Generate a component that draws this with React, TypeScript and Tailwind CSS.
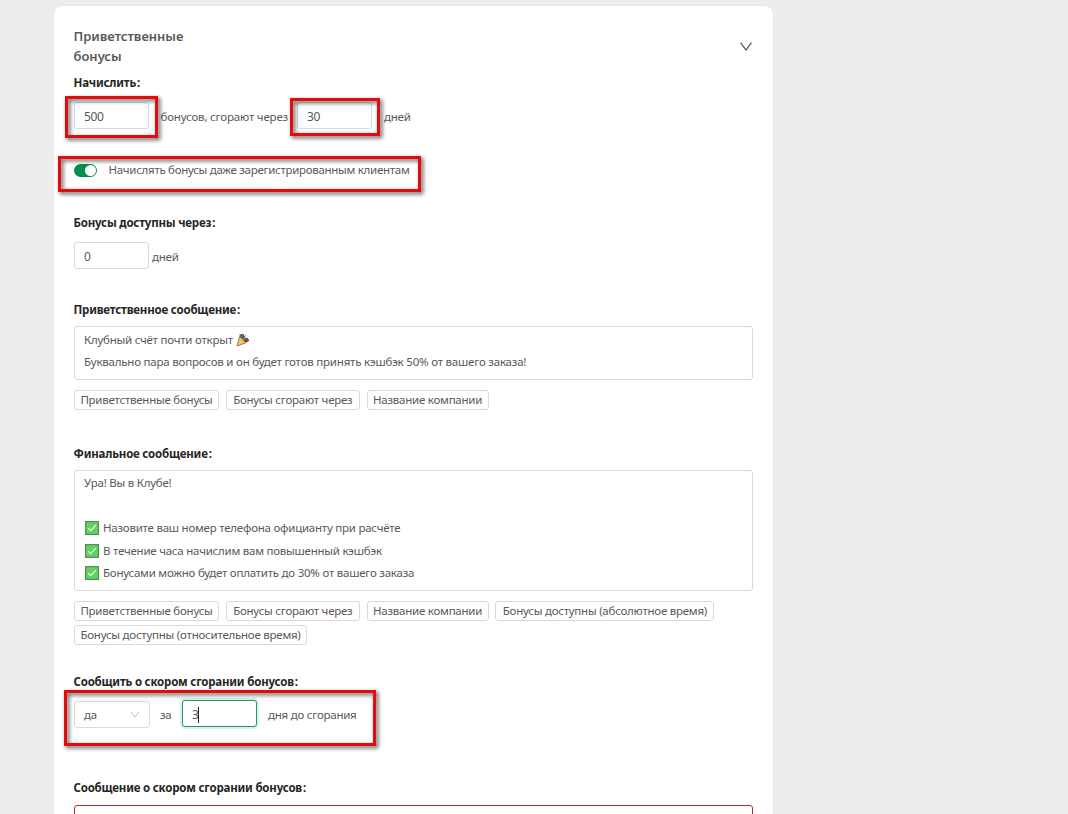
import type { ReactNode } from "react";

const GREETING_TAGS = [
  { label: "Приветственные бонусы", width: "w-[145px]" },
  { label: "Бонусы сгорают через", width: "w-[134px]" },
  { label: "Название компании", width: "w-[122px]" },
];

const FINAL_TAGS = [
  ...GREETING_TAGS,
  { label: "Бонусы доступны (абсолютное время)", width: "w-[219px]" },
  { label: "Бонусы доступны (относительное время)", width: "w-[233px]" },
];

const FINAL_POINTS = [
  "Назовите ваш номер телефона официанту при расчёте",
  "В течение часа начислим вам повышенный кэшбэк",
  "Бонусами можно будет оплатить до 30% от вашего заказа",
];

function Label({ children }: { children: ReactNode }) {
  return (
    <h3 className="-ml-[0.5px] h-5 text-[11.5px] leading-5 font-bold tracking-[-0.2px] whitespace-nowrap text-[#262626]">
      {children}
      <span className="ml-px">:</span>
    </h3>
  );
}

function Field({ children, className = "border-[#d9d9d9]" }: { children: ReactNode; className?: string }) {
  return (
    <div className={`flex h-[27px] w-[75px] shrink-0 items-center rounded-[3px] border bg-white pt-[3px] pl-[9px] text-[12px] tracking-[-0.4px] ${className}`}>
      {children}
    </div>
  );
}

function Tags({ items }: { items: { label: string; width: string }[] }) {
  return (
    <div className="mt-2.5 flex flex-wrap gap-x-[6.8px] gap-y-1">
      {items.map((tag) => (
        <span
          key={tag.label}
          className={`${tag.width} flex h-5 items-center justify-center rounded-[3px] border border-[#d9d9d9] whitespace-nowrap`}
        >
          {tag.label}
        </span>
      ))}
    </div>
  );
}

// Red marker frame drawn over the form
function Marker({ className }: { className: string }) {
  return (
    <div className={`pointer-events-none absolute border-3 border-[#e30b0b] drop-shadow-[2px_2px_2px_rgba(0,0,0,0.7)] ${className}`} />
  );
}

function Chevron({ className }: { className: string }) {
  return (
    <svg className={className} viewBox="0 0 12 9" fill="none" stroke="currentColor" strokeWidth="1.1">
      <path d="M0.6 0.6 6 8 11.4 0.6" />
    </svg>
  );
}

function CheckEmoji() {
  return (
    <svg className="mr-1 ml-px h-3.5 w-3.5 shrink-0" viewBox="0 0 14 14" fill="none">
      <rect x="0.6" y="0.6" width="12.8" height="12.8" fill="#5fd35f" stroke="#5a8a5c" strokeWidth="1.2" />
      <path d="M3.2 7.2 5.8 9.6 10.8 4.2" stroke="#e9fbe9" strokeWidth="1.2" />
    </svg>
  );
}

function PartyEmoji() {
  return (
    <svg className="ml-[3px] h-3.5 w-3.5 shrink-0" viewBox="0 0 14 14" fill="none">
      <path d="M3.4 1.4 7.2.8 9.4 4.4 7 6.6 4 4Z" fill="#4b6b68" />
      <path d="M7.4 6 11 4.6 13.4 7.4 10.6 9.4 8.2 8.6Z" fill="#70483f" />
      <path d="M3.6 3.8 9.8 9.8 1 13Z" fill="#f2c963" stroke="#635238" strokeWidth="0.7" />
      <path d="M6.6 5.2 10.2 2.2" stroke="#8b6a4a" />
    </svg>
  );
}

export default function App() {
  return (
    <div className="h-screen overflow-hidden bg-[#ededed] pt-1.5 pl-[54px] font-['Noto_Sans','Open_Sans',sans-serif] text-[11.5px] leading-[22.5px] tracking-[-0.24px] text-[#595959]">
      <main className="h-[900px] w-[719px] rounded-t-[8px] bg-white px-5 pt-5 shadow-[0_0_2px_rgba(0,0,0,0.08)]">
        <header className="flex justify-between">
          <h2 className="-ml-[0.5px] w-[131px] text-[13px] leading-5 font-semibold tracking-[-0.03px]">Приветственные бонусы</h2>
          <Chevron className="mt-4 mr-px h-[9px] w-3 text-[#4a4a4a]" />
        </header>

        <section className="mt-[7px]">
          <Label>Начислить</Label>
          <div className="relative mt-[9px] flex h-[27px] items-center whitespace-nowrap">
            <Field>500</Field>
            <span className="w-[148px] pt-[3px] pl-[11.5px] tracking-[-0.18px]">бонусов, сгорают через</span>
            <Field>30</Field>
            <span className="pt-[3px] pl-3">дней</span>
            <Marker className="-top-1.5 -left-[9px] h-[42px] w-[93px]" />
            <Marker className="-top-1 left-[216px] h-[38px] w-[90px]" />
          </div>
        </section>

        <div className="relative mt-[30px] flex h-[22px] items-center whitespace-nowrap">
          <div className="mr-[11.5px] flex h-[13px] w-[23px] items-center justify-end rounded-full bg-[#078d4b] px-px">
            <span className="h-[11px] w-[11px] rounded-full bg-white" />
          </div>
          <span className="tracking-[-0.29px]">Начислять бонусы даже зарегистрированным клиентам</span>
          <Marker className="-top-[3px] -left-4 h-9 w-[363px]" />
        </div>

        <section className="mt-8">
          <Label>Бонусы доступны через</Label>
          <div className="mt-[9px] flex items-center">
            <Field>0</Field>
            <span className="pt-1 pl-[3px]">дней</span>
          </div>
        </section>

        <section className="mt-[31px]">
          <Label>Приветственное сообщение</Label>
          <div className="mt-1.5 h-[54px] rounded-[3px] border border-[#d9d9d9] pt-0.5 pl-[9px] leading-[22px]">
            <p className="flex items-center">Клубный счёт почти открыт<PartyEmoji /></p>
            <p className="tracking-[-0.21px]">Буквально пара вопросов и он будет готов принять кэшбэк 50% от вашего заказа!</p>
          </div>
          <Tags items={GREETING_TAGS} />
        </section>

        <section className="mt-[34px]">
          <Label>Финальное сообщение</Label>
          <div className="mt-1.5 h-[121px] rounded-[3px] border border-[#d9d9d9] pt-px pl-[9px]">
            <p className="mb-[22.5px]">Ура! Вы в Клубе!</p>
            {FINAL_POINTS.map((point) => (
              <p key={point} className="flex items-center">
                <CheckEmoji />
                {point}
              </p>
            ))}
          </div>
          <Tags items={FINAL_TAGS} />
        </section>

        <section className="mt-[27px]">
          <Label>Сообщить о скором сгорании бонусов</Label>
          <div className="relative mt-2 flex h-7 items-start whitespace-nowrap">
            <div className="mt-px flex h-[27px] w-[76px] items-center justify-between rounded-[3px] border border-[#d9d9d9] pt-0.5 pr-[9px] pl-[9px]">
              да
              <Chevron className="mb-[3px] h-[7px] w-2.5 text-[#b5b5b5]" />
            </div>
            <span className="w-8 pt-1 pl-2.5">за</span>
            <Field className="border-[#2f8f62] shadow-[0_0_0_2px_rgba(40,200,120,0.2)]">
              3<span className="h-4 w-px bg-[#222]" />
            </Field>
            <span className="pt-1 pl-[11px]">дня до сгорания</span>
            <Marker className="-top-2.5 -left-2.5 h-14 w-[312px]" />
          </div>
        </section>

        <section className="mt-[50px]">
          <Label>Сообщение о скором сгорании бонусов</Label>
          <div className="mt-[7px] h-[54px] rounded-[3px] border border-[#b82a2a]" />
        </section>
      </main>
    </div>
  );
}
